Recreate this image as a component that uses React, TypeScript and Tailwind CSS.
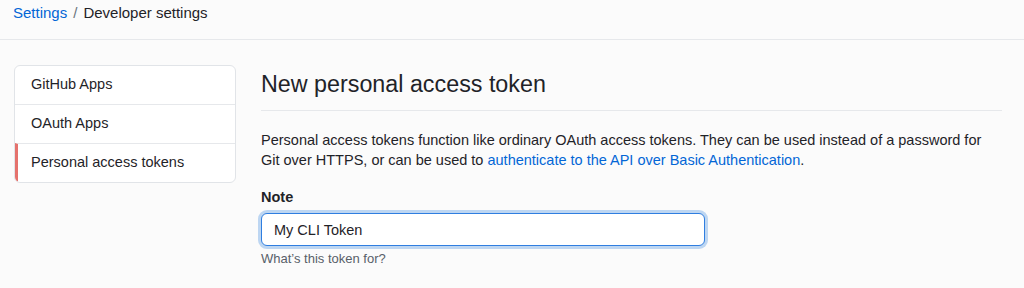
export default function App() {
  const items = ["GitHub Apps", "OAuth Apps", "Personal access tokens"];

  return (
    <div
      className="min-h-screen bg-[#fbfbfb] text-[#1f2328]"
      style={{ fontFamily: '"Liberation Sans", Arial, sans-serif' }}
    >
      {/* Breadcrumb */}
      <header className="h-[40px] border-b border-[#e6e8eb] px-[13px] pt-[3px]">
        <div className="text-[15px] leading-[20px]">
          <a className="text-[#0366d6]">Settings</a>
          <span className="text-[#6a737d] mx-[6px]">/</span>
          <span>Developer settings</span>
        </div>
      </header>

      <main className="flex gap-[25px] pl-[14px] pr-[22px] pt-[25px]">
        {/* Sidebar */}
        <nav className="w-[222px] shrink-0 self-start rounded-[6px] border border-[#e1e4e8] bg-white overflow-hidden">
          {items.map((label, i) => (
            <div
              key={label}
              className={`flex items-center text-[14.5px] ${
                i > 0 ? "h-[39px] border-t border-[#e6e8eb]" : "h-[38px]"
              } ${
                i === items.length - 1
                  ? "border-l-[3px] border-l-[#e5726d] pl-[13px]"
                  : "pl-[16px]"
              }`}
            >
              {label}
            </div>
          ))}
        </nav>

        {/* Content */}
        <section className="flex-1">
          <h2 className="pt-[3px] pb-[10px] text-[23.3px] leading-[32px] font-normal border-b border-[#e6e8eb]">
            New personal access token
          </h2>

          <p className="mt-[19px] text-[14.5px] leading-[20px]">
            Personal access tokens function like ordinary OAuth access tokens.
            They can be used instead of a password for
            <br />
            Git over HTTPS, or can be used to{" "}
            <a className="text-[#0366d6]">
              authenticate to the API over Basic Authentication
            </a>
            .
          </p>

          <label className="block mt-[17px] text-[14.5px] leading-[20px] font-bold">
            Note
          </label>
          <input
            type="text"
            defaultValue="My CLI Token"
            className="mt-[6px] block w-[444px] h-[33px] rounded-[6px] border border-[#2f7ee0] bg-white px-[12px] text-[14.5px] text-[#1f2328] outline-none shadow-[0_0_0_3px_rgba(3,102,214,0.25)]"
            style={{ fontFamily: '"Liberation Sans", Arial, sans-serif' }}
          />
          <p className="mt-[4px] text-[13px] leading-[18px] text-[#586069]">
            What’s this token for?
          </p>
        </section>
      </main>
    </div>
  );
}
